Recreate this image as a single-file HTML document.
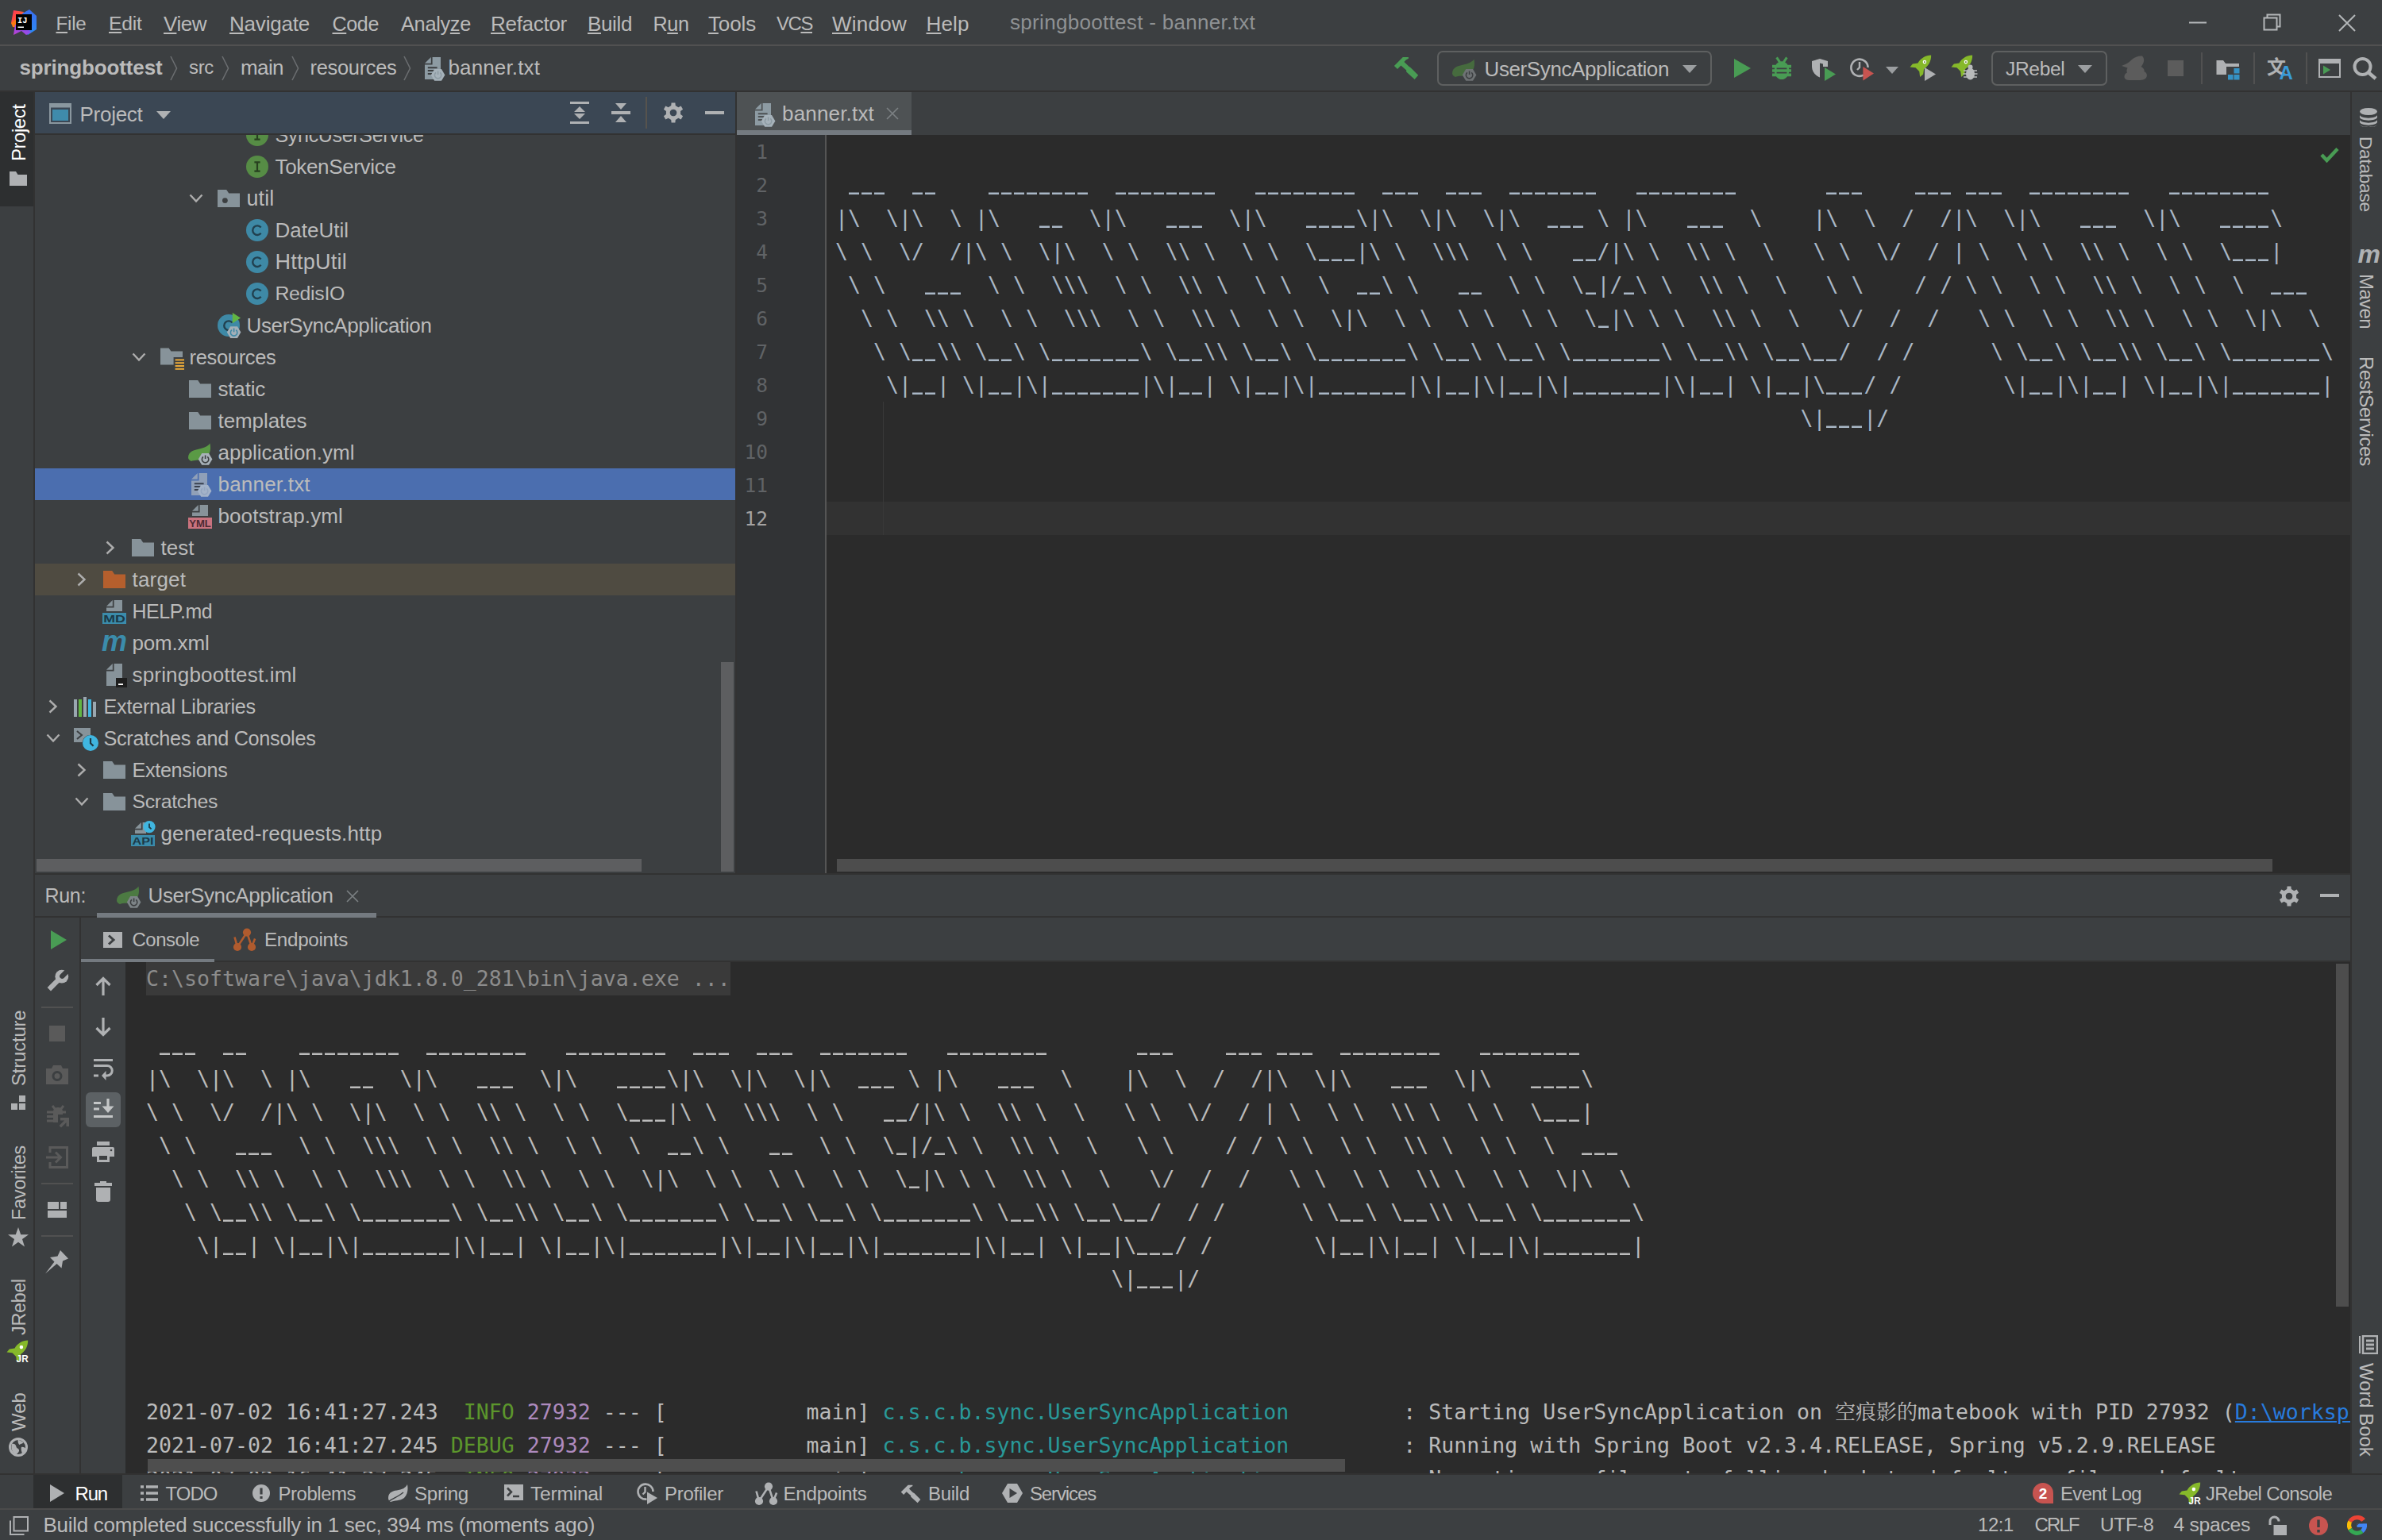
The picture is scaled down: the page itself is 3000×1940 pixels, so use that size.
<!DOCTYPE html>
<html lang="en"><head><meta charset="utf-8"><title>springboottest - banner.txt</title>
<style>
html,body{margin:0;padding:0;background:#3c3f41}
body{width:3000px;height:1940px;position:relative;overflow:hidden;font-family:"Liberation Sans",sans-serif;font-size:26px;color:#bbbbbb}
.a{position:absolute}
.t{position:absolute;white-space:pre;line-height:32px;height:32px}
.v{position:absolute;white-space:pre;line-height:32px;height:32px;transform-origin:0 0}
pre{margin:0;position:absolute;font-family:"DejaVu Sans Mono","Liberation Mono",monospace;font-size:26.578px;line-height:42px;white-space:pre}
u{text-decoration-thickness:2px;text-underline-offset:2px}
pre b{font-weight:bold;position:relative;top:-3px;-webkit-mask-image:repeating-linear-gradient(90deg,transparent 0 1.5px,#000 1.5px 14.5px,transparent 14.5px 16px);mask-image:repeating-linear-gradient(90deg,transparent 0 1.5px,#000 1.5px 14.5px,transparent 14.5px 16px)}

</style></head>
<body>
<div class="a" style="left:0px;top:56px;width:3000px;height:2px;background:#515151;"></div><div class="a" style="left:0px;top:114px;width:3000px;height:2px;background:#323232;"></div><div class="a" style="left:42px;top:116px;width:2px;height:1742px;background:#323232;"></div><div class="a" style="left:0px;top:116px;width:42px;height:144px;background:#2d2f30;"></div><div class="a" style="left:44px;top:116px;width:882px;height:52px;background:#3b4754;"></div><div class="a" style="left:44px;top:168px;width:882px;height:2px;background:#323232;"></div><div class="a" style="left:926px;top:116px;width:2px;height:984px;background:#323232;"></div><div class="a" style="left:928px;top:116px;width:2032px;height:54px;background:#3c3f41;"></div><div class="a" style="left:928px;top:116px;width:220px;height:54px;background:#4e5254;"></div><div class="a" style="left:928px;top:164px;width:220px;height:6px;background:#747a80;"></div><div class="a" style="left:928px;top:170px;width:2032px;height:930px;background:#2b2b2b;"></div><div class="a" style="left:928px;top:170px;width:111px;height:930px;background:#313335;"></div><div class="a" style="left:1039px;top:170px;width:2px;height:930px;background:#555555;"></div><div class="a" style="left:1041px;top:632px;width:1919px;height:42px;background:#323232;"></div><div class="a" style="left:1112px;top:506px;width:1px;height:168px;background:#393939;"></div><div class="a" style="left:2960px;top:116px;width:2px;height:1742px;background:#323232;"></div><div class="a" style="left:44px;top:1100px;width:2916px;height:2px;background:#323232;"></div><div class="a" style="left:44px;top:1154px;width:2916px;height:2px;background:#323232;"></div><div class="a" style="left:102px;top:1210px;width:2858px;height:2px;background:#323232;"></div><div class="a" style="left:158px;top:1212px;width:2802px;height:644px;background:#2b2b2b;"></div><div class="a" style="left:100px;top:1156px;width:2px;height:700px;background:#323232;"></div><div class="a" style="left:0px;top:1856px;width:3000px;height:2px;background:#323232;"></div><div class="a" style="left:42px;top:1858px;width:112px;height:42px;background:#2d2f30;"></div><div class="a" style="left:0px;top:1900px;width:3000px;height:2px;background:#4b4b4b;"></div><span class="t" style="left:70.5px;top:13.5px;font-size:24.18px;letter-spacing:-0.238px;"><u>F</u>ile</span><span class="t" style="left:137.0px;top:13.5px;font-size:24.70px;letter-spacing:-0.262px;"><u>E</u>dit</span><span class="t" style="left:206.0px;top:13.5px;letter-spacing:-0.473px;"><u>V</u>iew</span><span class="t" style="left:289.0px;top:13.5px;letter-spacing:-0.203px;"><u>N</u>avigate</span><span class="t" style="left:418.5px;top:13.5px;font-size:25.09px;letter-spacing:-0.367px;"><u>C</u>ode</span><span class="t" style="left:505.0px;top:13.5px;font-size:25.37px;letter-spacing:-0.319px;">Analy<u>z</u>e</span><span class="t" style="left:618.0px;top:13.5px;letter-spacing:-0.285px;"><u>R</u>efactor</span><span class="t" style="left:740.0px;top:13.5px;letter-spacing:-0.366px;"><u>B</u>uild</span><span class="t" style="left:822.5px;top:13.5px;font-size:25.15px;letter-spacing:-0.375px;">R<u>u</u>n</span><span class="t" style="left:892.0px;top:13.5px;letter-spacing:-0.141px;"><u>T</u>ools</span><span class="t" style="left:978.0px;top:13.5px;font-size:23.92px;letter-spacing:-1.391px;">VC<u>S</u></span><span class="t" style="left:1048.0px;top:13.5px;letter-spacing:0.253px;"><u>W</u>indow</span><span class="t" style="left:1166.5px;top:13.5px;letter-spacing:0.129px;"><u>H</u>elp</span><span class="t" style="left:1272.0px;top:11.5px;color:#8f9294;letter-spacing:0.310px;">springboottest - banner.txt</span><svg class="a" style="left:2757px;top:27px;" width="22" height="3" viewBox="0 0 22 3"><rect width="22" height="2" y="0.5" fill="#b4b7b9"/></svg><svg class="a" style="left:2850px;top:17px;" width="23" height="22" viewBox="0 0 23 22"><path d="M5.5 5.5V1.5H21.5V16.5H17.5M1.5 5.5H17.5V20.5H1.5Z" fill="none" stroke="#b4b7b9" stroke-width="2"/></svg><svg class="a" style="left:2945px;top:18px;" width="22" height="22" viewBox="0 0 22 22"><path d="M1 1L21 21M21 1L1 21" stroke="#b4b7b9" stroke-width="2" fill="none"/></svg><svg class="a" style="left:13px;top:11px;" width="34" height="34" viewBox="0 0 34 34"><defs><linearGradient id="lg1" x1="0" y1="0" x2="1" y2="1"><stop offset="0" stop-color="#fe315d"/><stop offset="1" stop-color="#f97a12"/></linearGradient><linearGradient id="lg2" x1="0" y1="0" x2="0" y2="1"><stop offset="0" stop-color="#3b6df0"/><stop offset="1" stop-color="#2c8cf4"/></linearGradient><linearGradient id="lg3" x1="0" y1="1" x2="1" y2="0"><stop offset="0" stop-color="#c03fd0"/><stop offset="1" stop-color="#6b57ff"/></linearGradient></defs><path d="M1 18L4 2L17 4L10 22Z" fill="url(#lg1)"/><path d="M1 18L8 13L10 24L3 23Z" fill="#f97a12"/><path d="M15 6L24 1L33 9L33 26L22 33L12 22Z" fill="url(#lg2)"/><path d="M4 33L6 20L22 24L26 30L20 33L14 28Z" fill="url(#lg3)"/><rect x="7" y="7" width="20" height="20" fill="#000000"/><rect x="9.500" y="22.500" width="7.500" height="1.500" fill="#ffffff"/><text x="9" y="17.500" font-family="Liberation Mono,monospace" font-weight="bold" font-size="11.500" fill="#ffffff" textLength="12.500" lengthAdjust="spacingAndGlyphs">IJ</text></svg><span class="t" style="left:24.5px;top:69.0px;font-weight:bold;letter-spacing:-0.143px;">springboottest</span><span class="t" style="left:238.0px;top:69.0px;font-size:23.92px;letter-spacing:-0.292px;">src</span><span class="t" style="left:303.0px;top:69.0px;letter-spacing:-0.590px;">main</span><span class="t" style="left:390.5px;top:69.0px;font-size:25.46px;letter-spacing:-0.307px;">resources</span><span class="t" style="left:564.5px;top:69.0px;letter-spacing:0.130px;">banner.txt</span><svg class="a" style="left:214px;top:70px;" width="10" height="32" viewBox="0 0 10 32"><path d="M1 1L8.5 16L1 31" fill="none" stroke="#6b6e70" stroke-width="1.6"/></svg><svg class="a" style="left:279px;top:70px;" width="10" height="32" viewBox="0 0 10 32"><path d="M1 1L8.5 16L1 31" fill="none" stroke="#6b6e70" stroke-width="1.6"/></svg><svg class="a" style="left:367px;top:70px;" width="10" height="32" viewBox="0 0 10 32"><path d="M1 1L8.5 16L1 31" fill="none" stroke="#6b6e70" stroke-width="1.6"/></svg><svg class="a" style="left:508px;top:70px;" width="10" height="32" viewBox="0 0 10 32"><path d="M1 1L8.5 16L1 31" fill="none" stroke="#6b6e70" stroke-width="1.6"/></svg><svg class="a" style="left:62px;top:130px;" width="28" height="26" viewBox="0 0 28 26"><rect x="1" y="1" width="26" height="24" fill="none" stroke="#8a979f" stroke-width="2"/><rect x="0" y="0" width="28" height="5.500" fill="#8a979f"/><rect x="4" y="8" width="20" height="14" fill="#3f8bac"/></svg><span class="t" style="left:100.5px;top:127.5px;letter-spacing:-0.275px;">Project</span><svg class="a" style="left:197px;top:140px;" width="18" height="10" viewBox="0 0 18 10"><path d="M0 0H18L9 10Z" fill="#afb1b3"/></svg><svg class="a" style="left:718px;top:128px;" width="24" height="28" viewBox="0 0 24 28"><path d="M0 1.5H24M0 26.5H24" stroke="#afb1b3" stroke-width="3"/><path d="M12 6L19 13H5ZM12 22L19 15H5Z" fill="#afb1b3"/></svg><svg class="a" style="left:769px;top:128px;" width="26" height="28" viewBox="0 0 26 28"><path d="M1 14H25" stroke="#afb1b3" stroke-width="4"/><path d="M13 10L20 2H6ZM13 18L20 26H6Z" fill="#afb1b3"/></svg><div class="a" style="left:813px;top:122px;width:2px;height:40px;background:#57534d;"></div><svg class="a" style="left:834.5px;top:129px;" width="26" height="26" viewBox="0 0 26 26"><path fill="#afb1b3" fill-rule="evenodd" d="M10.25 4.12L10.58 0.43L15.42 0.43L15.75 4.12L19.32 6.18L22.68 4.62L25.09 8.81L22.07 10.94L22.07 15.06L25.09 17.19L22.68 21.38L19.32 19.82L15.75 21.88L15.42 25.57L10.58 25.57L10.25 21.88L6.68 19.82L3.32 21.38L0.91 17.19L3.93 15.06L3.93 10.94L0.91 8.81L3.32 4.62L6.68 6.18ZM13 8.7a4.3 4.3 0 1 0 0.01 0z"/></svg><div class="a" style="left:888px;top:140px;width:24px;height:4px;background:#afb1b3;"></div><div class="a" style="left:44px;top:590px;width:882px;height:40px;background:#4b6eaf;"></div><div class="a" style="left:44px;top:710px;width:882px;height:40px;background:#4f4b41;"></div><div class="a" style="left:44px;top:170px;width:882px;height:930px;overflow:hidden"><div class="a" style="left:-44px;top:-170px;width:3000px;height:1940px"><svg class="a" style="left:307.5px;top:154px;" width="32" height="32" viewBox="0 0 16 16"><circle cx="8" cy="8" r="7" fill="#568c45"/><path d="M6.200 5.200H9.800M6.200 10.800H9.800M8 5.200V10.800" stroke="#27401f" stroke-width="1.100" fill="none"/></svg><span class="t" style="left:346.5px;top:154.0px;font-size:25.01px;letter-spacing:-0.316px;">SyncUserService</span><svg class="a" style="left:307.5px;top:194px;" width="32" height="32" viewBox="0 0 16 16"><circle cx="8" cy="8" r="7" fill="#568c45"/><path d="M6.200 5.200H9.800M6.200 10.800H9.800M8 5.200V10.800" stroke="#27401f" stroke-width="1.100" fill="none"/></svg><span class="t" style="left:346.5px;top:194.0px;letter-spacing:-0.340px;">TokenService</span><svg class="a" style="left:237.5px;top:244px;" width="18" height="12" viewBox="0 0 18 12"><path d="M1.500 1.500L9 9.500L16.500 1.500" fill="none" stroke="#adadad" stroke-width="2.400"/></svg><svg class="a" style="left:271.5px;top:234px;" width="32" height="32" viewBox="0 0 16 16"><path d="M1 13.500V2.500h5.600l1.500 2.200H15v8.800z" fill="#87939a"/><circle cx="5.700" cy="9.300" r="1.700" fill="#3c3f41"/></svg><span class="t" style="left:310.5px;top:234.0px;font-size:26.83px;letter-spacing:0.176px;">util</span><svg class="a" style="left:307.5px;top:274px;" width="32" height="32" viewBox="0 0 16 16"><circle cx="8" cy="8" r="7" fill="#3e89a6"/><path d="M10.300 6.300A2.900 2.900 0 1 0 10.300 9.900" stroke="#21404f" stroke-width="1.200" fill="none"/></svg><span class="t" style="left:346.5px;top:274.0px;">DateUtil</span><svg class="a" style="left:307.5px;top:314px;" width="32" height="32" viewBox="0 0 16 16"><circle cx="8" cy="8" r="7" fill="#3e89a6"/><path d="M10.300 6.300A2.900 2.900 0 1 0 10.300 9.900" stroke="#21404f" stroke-width="1.200" fill="none"/></svg><span class="t" style="left:346.5px;top:314.0px;font-size:27.06px;letter-spacing:0.229px;">HttpUtil</span><svg class="a" style="left:307.5px;top:354px;" width="32" height="32" viewBox="0 0 16 16"><circle cx="8" cy="8" r="7" fill="#3e89a6"/><path d="M10.300 6.300A2.900 2.900 0 1 0 10.300 9.900" stroke="#21404f" stroke-width="1.200" fill="none"/></svg><span class="t" style="left:346.5px;top:354.0px;font-size:24.84px;letter-spacing:-0.312px;">RedisIO</span><svg class="a" style="left:271.5px;top:394px;" width="32" height="32" viewBox="0 0 16 16"><circle cx="8" cy="8" r="7" fill="#3e89a6"/><path d="M10.300 6.300A2.900 2.900 0 1 0 10.300 9.900" stroke="#21404f" stroke-width="1.200" fill="none"/><path d="M10.400 0L15.500 3.200L10.400 6.600Z" fill="#62b543"/><path d="M6.9 12.3L9.100000000000001 8.600000000000001H13.5L15.700000000000001 12.3L13.5 16.0H9.100000000000001Z" fill="#a3afb8"/><path d="M10.0 10.8A2.100 2.100 0 1 0 12.600000000000001 10.8M11.3 9.8V12.100000000000001" fill="none" stroke="#3e89a6" stroke-width="0.800"/></svg><span class="t" style="left:310.5px;top:394.0px;letter-spacing:-0.363px;">UserSyncApplication</span><svg class="a" style="left:165.5px;top:444px;" width="18" height="12" viewBox="0 0 18 12"><path d="M1.500 1.500L9 9.500L16.500 1.500" fill="none" stroke="#adadad" stroke-width="2.400"/></svg><svg class="a" style="left:199.5px;top:434px;" width="32" height="32" viewBox="0 0 16 16"><path d="M1 12.800V2.200h5.300l1.400 2H15V8H9.300v4.800z" fill="#87939a"/><rect x="10.300" y="9.2" width="5.700" height="1" fill="#e9a93a"/><rect x="10.300" y="11.1" width="5.700" height="1" fill="#e9a93a"/><rect x="10.300" y="13" width="5.700" height="1" fill="#e9a93a"/><rect x="10.300" y="14.9" width="5.700" height="1" fill="#e9a93a"/></svg><span class="t" style="left:238.5px;top:434.0px;font-size:25.46px;letter-spacing:-0.307px;">resources</span><svg class="a" style="left:235.5px;top:474px;" width="32" height="32" viewBox="0 0 16 16"><path d="M1 13.500V2.500h5.600l1.500 2.200H15v8.800z" fill="#87939a"/></svg><span class="t" style="left:274.5px;top:474.0px;letter-spacing:-0.181px;">static</span><svg class="a" style="left:235.5px;top:514px;" width="32" height="32" viewBox="0 0 16 16"><path d="M1 13.500V2.500h5.600l1.500 2.200H15v8.800z" fill="#87939a"/></svg><span class="t" style="left:274.5px;top:514.0px;letter-spacing:-0.082px;">templates</span><svg class="a" style="left:235.5px;top:554px;" width="32" height="32" viewBox="0 0 16 16"><path d="M0.500 11.300C0.500 7 4.500 6.500 8.500 5.500C11.500 4.700 13.500 3.500 14.200 2.200C14.800 5 14.800 8.500 12 11C9 13.500 4 12.500 2.500 13.500C1.500 13 0.500 12.500 0.500 11.300Z" fill="#5a9a45"/><path d="M6.9 12.2L9.100000000000001 8.5H13.5L15.700000000000001 12.2L13.5 15.899999999999999H9.100000000000001Z" fill="#a8b2b9"/><path d="M10.0 10.7A2.100 2.100 0 1 0 12.600000000000001 10.7M11.3 9.7V12.0" fill="none" stroke="#3c3f41" stroke-width="0.800"/></svg><span class="t" style="left:274.5px;top:554.0px;">application.yml</span><svg class="a" style="left:235.0px;top:594px;" width="32" height="32" viewBox="0 0 16 16"><path d="M7.800 1H13V15H3V5.800H7.800Z" fill="#90a0b8"/><path d="M6.900 1L3 4.900H6.900Z" fill="#90a0b8"/><path d="M4.900 7.600H10.800M4.900 9.500H9M4.900 11.500H7.600" stroke="#39414f" stroke-width="0.950"/><path d="M6.9 12.2L9.100000000000001 8.5H13.5L15.700000000000001 12.2L13.5 15.899999999999999H9.100000000000001Z" fill="#a3b3c9"/><path d="M10.0 10.7A2.100 2.100 0 1 0 12.600000000000001 10.7M11.3 9.7V12.0" fill="none" stroke="#93a5c0" stroke-width="0.800"/></svg><span class="t" style="left:274.5px;top:594.0px;letter-spacing:0.210px;">banner.txt</span><svg class="a" style="left:235.5px;top:634px;" width="32" height="32" viewBox="0 0 16 16"><path d="M7.800 1H13V8H3V5.800H7.800Z" fill="#87939a"/><path d="M6.900 1L3 4.900H6.900Z" fill="#87939a"/><rect x="0.500" y="9" width="15" height="7" fill="#c9737f"/><text x="8" y="15.100" font-family="Liberation Sans,sans-serif" font-weight="bold" font-size="6.600" text-anchor="middle" fill="#4d2a33" textLength="13.800" lengthAdjust="spacingAndGlyphs">YML</text></svg><span class="t" style="left:274.5px;top:634.0px;letter-spacing:0.102px;">bootstrap.yml</span><svg class="a" style="left:132.5px;top:681px;" width="12" height="18" viewBox="0 0 12 18"><path d="M1.500 1.500L9.500 9L1.500 16.500" fill="none" stroke="#adadad" stroke-width="2.400"/></svg><svg class="a" style="left:163.5px;top:674px;" width="32" height="32" viewBox="0 0 16 16"><path d="M1 13.500V2.500h5.600l1.500 2.200H15v8.800z" fill="#87939a"/></svg><span class="t" style="left:202.5px;top:674.0px;">test</span><svg class="a" style="left:96.5px;top:721px;" width="12" height="18" viewBox="0 0 12 18"><path d="M1.500 1.500L9.500 9L1.500 16.500" fill="none" stroke="#adadad" stroke-width="2.400"/></svg><svg class="a" style="left:127.5px;top:714px;" width="32" height="32" viewBox="0 0 16 16"><path d="M1 13.500V2.500h5.600l1.500 2.200H15v8.800z" fill="#b55f2d"/></svg><span class="t" style="left:166.5px;top:714.0px;letter-spacing:0.183px;">target</span><svg class="a" style="left:127.5px;top:754px;" width="32" height="32" viewBox="0 0 16 16"><path d="M7.800 1H13V8H3V5.800H7.800Z" fill="#87939a"/><path d="M6.900 1L3 4.900H6.900Z" fill="#87939a"/><rect x="0.500" y="9" width="15" height="7" fill="#3b8cab"/><text x="8" y="15.100" font-family="Liberation Sans,sans-serif" font-weight="bold" font-size="6.600" text-anchor="middle" fill="#1c3947" textLength="13.800" lengthAdjust="spacingAndGlyphs">MD</text></svg><span class="t" style="left:166.5px;top:754.0px;font-size:24.91px;letter-spacing:-0.368px;">HELP.md</span><span class="t" style="left:128.0px;top:792.0px;font-size:36px;color:#3b8cab;font-weight:bold;font-style:italic;">m</span><span class="t" style="left:166.5px;top:794.0px;letter-spacing:-0.179px;">pom.xml</span><svg class="a" style="left:127.5px;top:834px;" width="32" height="32" viewBox="0 0 16 16"><path d="M7.800 1H13V15H3V5.800H7.800Z" fill="#87939a"/><path d="M6.900 1L3 4.900H6.900Z" fill="#87939a"/><rect x="9" y="10" width="7" height="6" fill="#1e1e1e"/><rect x="10.500" y="13.600" width="3" height="0.900" fill="#ffffff"/></svg><span class="t" style="left:166.5px;top:834.0px;letter-spacing:0.180px;">springboottest.iml</span><svg class="a" style="left:60.5px;top:881px;" width="12" height="18" viewBox="0 0 12 18"><path d="M1.500 1.500L9.500 9L1.500 16.500" fill="none" stroke="#adadad" stroke-width="2.400"/></svg><svg class="a" style="left:91.5px;top:874px;" width="32" height="32" viewBox="0 0 16 16"><rect x="0.500" y="3.500" width="2" height="11" fill="#9aa7b0"/><rect x="3.500" y="3.500" width="2" height="11" fill="#62b543"/><rect x="6.500" y="2" width="2" height="12.500" fill="#9aa7b0"/><rect x="9.500" y="3.500" width="2" height="11" fill="#40b6e0"/><rect x="12.500" y="5" width="2" height="9.500" fill="#9aa7b0"/></svg><span class="t" style="left:130.5px;top:874.0px;font-size:25.23px;letter-spacing:-0.269px;">External Libraries</span><svg class="a" style="left:57.5px;top:924px;" width="18" height="12" viewBox="0 0 18 12"><path d="M1.500 1.500L9 9.500L16.500 1.500" fill="none" stroke="#adadad" stroke-width="2.400"/></svg><svg class="a" style="left:91.5px;top:914px;" width="32" height="32" viewBox="0 0 16 16"><path d="M0.500 1.500H11V6A5 5 0 0 0 5.800 10.500H0.500Z" fill="#87939a"/><path d="M2.500 3.500L5.500 6L2.500 8.500" stroke="#3c3f41" stroke-width="1" fill="none"/><circle cx="11" cy="11" r="5" fill="#40b6e0"/><path d="M11 8V11.200L12.800 12.900" stroke="#1f3a45" stroke-width="1.100" fill="none"/></svg><span class="t" style="left:130.5px;top:914.0px;font-size:25.26px;letter-spacing:-0.305px;">Scratches and Consoles</span><svg class="a" style="left:96.5px;top:961px;" width="12" height="18" viewBox="0 0 12 18"><path d="M1.500 1.500L9.500 9L1.500 16.500" fill="none" stroke="#adadad" stroke-width="2.400"/></svg><svg class="a" style="left:127.5px;top:954px;" width="32" height="32" viewBox="0 0 16 16"><path d="M1 13.500V2.500h5.600l1.500 2.200H15v8.800z" fill="#87939a"/></svg><span class="t" style="left:166.5px;top:954.0px;font-size:25.16px;letter-spacing:-0.306px;">Extensions</span><svg class="a" style="left:93.5px;top:1004px;" width="18" height="12" viewBox="0 0 18 12"><path d="M1.500 1.500L9 9.500L16.500 1.500" fill="none" stroke="#adadad" stroke-width="2.400"/></svg><svg class="a" style="left:127.5px;top:994px;" width="32" height="32" viewBox="0 0 16 16"><path d="M1 13.500V2.500h5.600l1.500 2.200H15v8.800z" fill="#87939a"/></svg><span class="t" style="left:166.5px;top:994.0px;font-size:24.80px;letter-spacing:-0.307px;">Scratches</span><svg class="a" style="left:163.5px;top:1034px;" width="32" height="32" viewBox="0 0 16 16"><path d="M7.800 1H10V8H3V5.800H7.800Z" fill="#87939a"/><path d="M6.900 1L3 4.900H6.900Z" fill="#87939a"/><rect x="0.500" y="9" width="15" height="7" fill="#3b8cab"/><text x="8" y="15.100" font-family="Liberation Sans,sans-serif" font-weight="bold" font-size="6.200" text-anchor="middle" fill="#1c3947" textLength="13.500" lengthAdjust="spacingAndGlyphs">API</text><circle cx="12" cy="3.800" r="3.800" fill="#40b6e0"/><path d="M12 1.800V4L13.300 5.200" stroke="#1f3a45" stroke-width="0.900" fill="none"/></svg><span class="t" style="left:202.5px;top:1034.0px;letter-spacing:0.118px;">generated-requests.http</span></div></div><div class="a" style="left:908px;top:834px;width:16px;height:264px;background:#5d5e60;"></div><div class="a" style="left:46px;top:1082px;width:762px;height:16px;background:#5d5e60;"></div><svg class="a" style="left:944.5px;top:128px;" width="32" height="32" viewBox="0 0 16 16"><path d="M7.800 1H13V15H3V5.800H7.800Z" fill="#8d9ba3"/><path d="M6.900 1L3 4.900H6.900Z" fill="#8d9ba3"/><path d="M4.900 7.600H10.800M4.900 9.500H9M4.900 11.500H7.600" stroke="#4e5254" stroke-width="0.950"/><path d="M6.9 12.2L9.100000000000001 8.5H13.5L15.700000000000001 12.2L13.5 15.899999999999999H9.100000000000001Z" fill="#a6b2ba"/><path d="M10.0 10.7A2.100 2.100 0 1 0 12.600000000000001 10.7M11.3 9.7V12.0" fill="none" stroke="#8d9ba3" stroke-width="0.800"/></svg><span class="t" style="left:985.0px;top:127.0px;letter-spacing:0.180px;">banner.txt</span><svg class="a" style="left:1116px;top:135px;" width="16" height="16" viewBox="0 0 16 16"><path d="M1 1L15 15M15 1L1 15" stroke="#7c8184" stroke-width="1.600" fill="none"/></svg><svg class="a" style="left:529px;top:70px;" width="32" height="32" viewBox="0 0 16 16"><path d="M7.800 1H13V15H3V5.800H7.800Z" fill="#8d9ba3"/><path d="M6.900 1L3 4.900H6.900Z" fill="#8d9ba3"/><path d="M4.900 7.600H10.800M4.900 9.500H9M4.900 11.500H7.600" stroke="#3c3f41" stroke-width="0.950"/><path d="M6.9 12.2L9.100000000000001 8.5H13.5L15.700000000000001 12.2L13.5 15.899999999999999H9.100000000000001Z" fill="#a6b2ba"/><path d="M10.0 10.7A2.100 2.100 0 1 0 12.600000000000001 10.7M11.3 9.7V12.0" fill="none" stroke="#8d9ba3" stroke-width="0.800"/></svg><span class="t" style="left:906px;width:61px;text-align:right;top:175.5px;font-family:'DejaVu Sans Mono',monospace;font-size:24.5px;color:#606366">1</span><span class="t" style="left:906px;width:61px;text-align:right;top:217.5px;font-family:'DejaVu Sans Mono',monospace;font-size:24.5px;color:#606366">2</span><span class="t" style="left:906px;width:61px;text-align:right;top:259.5px;font-family:'DejaVu Sans Mono',monospace;font-size:24.5px;color:#606366">3</span><span class="t" style="left:906px;width:61px;text-align:right;top:301.5px;font-family:'DejaVu Sans Mono',monospace;font-size:24.5px;color:#606366">4</span><span class="t" style="left:906px;width:61px;text-align:right;top:343.5px;font-family:'DejaVu Sans Mono',monospace;font-size:24.5px;color:#606366">5</span><span class="t" style="left:906px;width:61px;text-align:right;top:385.5px;font-family:'DejaVu Sans Mono',monospace;font-size:24.5px;color:#606366">6</span><span class="t" style="left:906px;width:61px;text-align:right;top:427.5px;font-family:'DejaVu Sans Mono',monospace;font-size:24.5px;color:#606366">7</span><span class="t" style="left:906px;width:61px;text-align:right;top:469.5px;font-family:'DejaVu Sans Mono',monospace;font-size:24.5px;color:#606366">8</span><span class="t" style="left:906px;width:61px;text-align:right;top:511.5px;font-family:'DejaVu Sans Mono',monospace;font-size:24.5px;color:#606366">9</span><span class="t" style="left:906px;width:61px;text-align:right;top:553.5px;font-family:'DejaVu Sans Mono',monospace;font-size:24.5px;color:#606366">10</span><span class="t" style="left:906px;width:61px;text-align:right;top:595.5px;font-family:'DejaVu Sans Mono',monospace;font-size:24.5px;color:#606366">11</span><span class="t" style="left:906px;width:61px;text-align:right;top:637.5px;font-family:'DejaVu Sans Mono',monospace;font-size:24.5px;color:#a4a3a3">12</span><pre style="left:1052px;top:212px;color:#a9b7c6"> <b>___</b>  <b>__</b>    <b>________</b>  <b>________</b>   <b>________</b>  <b>___</b>  <b>___</b>  <b>_______</b>   <b>________</b>       <b>___</b>    <b>___</b> <b>___</b>  <b>________</b>   <b>________</b>
|\  \|\  \ |\   <b>__</b>  \|\   <b>___</b>  \|\   <b>____</b>\|\  \|\  \|\  <b>___</b> \ |\   <b>___</b>  \    |\  \  /  /|\  \|\   <b>___</b>  \|\   <b>____</b>\
\ \  \/  /|\ \  \|\  \ \  \\ \  \ \  \<b>___</b>|\ \  \\\  \ \   <b>__</b>/|\ \  \\ \  \   \ \  \/  / | \  \ \  \\ \  \ \  \<b>___</b>|
 \ \   <b>___</b>  \ \  \\\  \ \  \\ \  \ \  \  <b>__</b>\ \   <b>__</b>  \ \  \<b>_</b>|/<b>_</b>\ \  \\ \  \   \ \    / / \ \  \ \  \\ \  \ \  \  <b>___</b>
  \ \  \\ \  \ \  \\\  \ \  \\ \  \ \  \|\  \ \  \ \  \ \  \<b>_</b>|\ \ \  \\ \  \   \/  /  /   \ \  \ \  \\ \  \ \  \|\  \
   \ \<b>__</b>\\ \<b>__</b>\ \<b>_______</b>\ \<b>__</b>\\ \<b>__</b>\ \<b>_______</b>\ \<b>__</b>\ \<b>__</b>\ \<b>_______</b>\ \<b>__</b>\\ \<b>__</b>\<b>__</b>/  / /      \ \<b>__</b>\ \<b>__</b>\\ \<b>__</b>\ \<b>_______</b>\
    \|<b>__</b>| \|<b>__</b>|\|<b>_______</b>|\|<b>__</b>| \|<b>__</b>|\|<b>_______</b>|\|<b>__</b>|\|<b>__</b>|\|<b>_______</b>|\|<b>__</b>| \|<b>__</b>|\<b>___</b>/ /        \|<b>__</b>|\|<b>__</b>| \|<b>__</b>|\|<b>_______</b>|
                                                                            \|<b>___</b>|/</pre><svg class="a" style="left:2922px;top:185px;" width="24" height="20" viewBox="0 0 24 20"><path d="M2 10L8.500 17L22 2.500" fill="none" stroke="#499c54" stroke-width="4.500"/></svg><div class="a" style="left:1054px;top:1082px;width:1808px;height:16px;background:#4d4d4d;"></div><span class="t" style="left:56.5px;top:1111.5px;font-size:25.01px;letter-spacing:-0.328px;">Run:</span><div class="a" style="left:122px;top:1150px;width:352px;height:6px;background:#747a80;"></div><span class="t" style="left:186.5px;top:1111.5px;letter-spacing:-0.363px;">UserSyncApplication</span><svg class="a" style="left:436px;top:1121px;" width="16" height="16" viewBox="0 0 16 16"><path d="M1 1L15 15M15 1L1 15" stroke="#7c8184" stroke-width="1.600" fill="none"/></svg><svg class="a" style="left:2870px;top:1115.5px;" width="26" height="26" viewBox="0 0 26 26"><path fill="#afb1b3" fill-rule="evenodd" d="M10.25 4.12L10.58 0.43L15.42 0.43L15.75 4.12L19.32 6.18L22.68 4.62L25.09 8.81L22.07 10.94L22.07 15.06L25.09 17.19L22.68 21.38L19.32 19.82L15.75 21.88L15.42 25.57L10.58 25.57L10.25 21.88L6.68 19.82L3.32 21.38L0.91 17.19L3.93 15.06L3.93 10.94L0.91 8.81L3.32 4.62L6.68 6.18ZM13 8.7a4.3 4.3 0 1 0 0.01 0z"/></svg><div class="a" style="left:2922px;top:1126px;width:24px;height:4px;background:#afb1b3;"></div><div class="a" style="left:102px;top:1208px;width:168px;height:4px;background:#747a80;"></div><span class="t" style="left:166.5px;top:1167.5px;font-size:23.92px;letter-spacing:-0.460px;">Console</span><span class="t" style="left:333.0px;top:1167.5px;font-size:24.21px;letter-spacing:-0.295px;">Endpoints</span><div class="a" style="left:158px;top:1212px;width:2802px;height:644px;overflow:hidden"><div class="a" style="left:26px;top:0px;width:736px;height:42px;background:#3a3a3a;"></div><pre style="left:26px;top:0px;color:#bbbbbb"><span style="color:#8c8c8c">C:\software\java\jdk1.8.0_281\bin\java.exe ...</span>

 <b>___</b>  <b>__</b>    <b>________</b>  <b>________</b>   <b>________</b>  <b>___</b>  <b>___</b>  <b>_______</b>   <b>________</b>       <b>___</b>    <b>___</b> <b>___</b>  <b>________</b>   <b>________</b>
|\  \|\  \ |\   <b>__</b>  \|\   <b>___</b>  \|\   <b>____</b>\|\  \|\  \|\  <b>___</b> \ |\   <b>___</b>  \    |\  \  /  /|\  \|\   <b>___</b>  \|\   <b>____</b>\
\ \  \/  /|\ \  \|\  \ \  \\ \  \ \  \<b>___</b>|\ \  \\\  \ \   <b>__</b>/|\ \  \\ \  \   \ \  \/  / | \  \ \  \\ \  \ \  \<b>___</b>|
 \ \   <b>___</b>  \ \  \\\  \ \  \\ \  \ \  \  <b>__</b>\ \   <b>__</b>  \ \  \<b>_</b>|/<b>_</b>\ \  \\ \  \   \ \    / / \ \  \ \  \\ \  \ \  \  <b>___</b>
  \ \  \\ \  \ \  \\\  \ \  \\ \  \ \  \|\  \ \  \ \  \ \  \<b>_</b>|\ \ \  \\ \  \   \/  /  /   \ \  \ \  \\ \  \ \  \|\  \
   \ \<b>__</b>\\ \<b>__</b>\ \<b>_______</b>\ \<b>__</b>\\ \<b>__</b>\ \<b>_______</b>\ \<b>__</b>\ \<b>__</b>\ \<b>_______</b>\ \<b>__</b>\\ \<b>__</b>\<b>__</b>/  / /      \ \<b>__</b>\ \<b>__</b>\\ \<b>__</b>\ \<b>_______</b>\
    \|<b>__</b>| \|<b>__</b>|\|<b>_______</b>|\|<b>__</b>| \|<b>__</b>|\|<b>_______</b>|\|<b>__</b>|\|<b>__</b>|\|<b>_______</b>|\|<b>__</b>| \|<b>__</b>|\<b>___</b>/ /        \|<b>__</b>|\|<b>__</b>| \|<b>__</b>|\|<b>_______</b>|
                                                                            \|<b>___</b>|/



2021-07-02 16:41:27.243 <span style="color:#5c962c"> INFO</span> <span style="color:#ae8abe">27932</span> --- [           main] <span style="color:#299999">c.s.c.b.sync.UserSyncApplication        </span> : Starting UserSyncApplication on <span style="font-family:'Noto Serif CJK SC','Noto Sans CJK SC',serif;font-size:26px;line-height:0">空痕影的</span>matebook with PID 27932 (<span style="color:#287bde;text-decoration:underline">D:\workspace\</span>
2021-07-02 16:41:27.245 <span style="color:#5c962c">DEBUG</span> <span style="color:#ae8abe">27932</span> --- [           main] <span style="color:#299999">c.s.c.b.sync.UserSyncApplication        </span> : Running with Spring Boot v2.3.4.RELEASE, Spring v5.2.9.RELEASE
2021-07-02 16:41:27.245 <span style="color:#5c962c"> INFO</span> <span style="color:#ae8abe">27932</span> --- [           main] <span style="color:#299999">c.s.c.b.sync.UserSyncApplication        </span> : No active profile set, falling back to default profiles: default</pre><div class="a" style="left:28px;top:626px;width:1508px;height:16px;background:#4e4e4e;"></div></div><div class="a" style="left:2942px;top:1214px;width:16px;height:432px;background:#4d4d4d;"></div><svg class="a" style="left:1755px;top:70px;" width="32" height="32" viewBox="0 0 32 32"><path d="M0.900 13L11.800 2.100H18.900V3.700L15.700 5.600L13.500 8.100L19.500 13.800L21.400 14.900L31.200 24.700L26.600 29.900L16.200 20.400V18.500L9.400 12.500L5 17.100Z" fill="#499c54"/></svg><div class="a" style="left:1810px;top:64px;width:342px;height:40px;border:2px solid #5e6060;border-radius:7px"></div><svg class="a" style="left:1828px;top:69.5px;" width="32" height="32" viewBox="0 0 16 16"><path d="M0.500 11.300C0.500 7 4.500 6.500 8.500 5.500C11.500 4.700 13.500 3.500 14.200 2.200C14.800 5 14.800 8.500 12 11C9 13.500 4 12.500 2.500 13.500C1.500 13 0.500 12.500 0.500 11.300Z" fill="#466b3e"/><path d="M6.9 12.2L9.100000000000001 8.5H13.5L15.700000000000001 12.2L13.5 15.899999999999999H9.100000000000001Z" fill="#6e7274"/><path d="M10.0 10.7A2.100 2.100 0 1 0 12.600000000000001 10.7M11.3 9.7V12.0" fill="none" stroke="#3c3f41" stroke-width="0.800"/></svg><span class="t" style="left:1869.5px;top:70.5px;letter-spacing:-0.389px;">UserSyncApplication</span><svg class="a" style="left:2119px;top:82px;" width="18" height="10" viewBox="0 0 18 10"><path d="M0 0H18L9 10Z" fill="#9b9ea0"/></svg><svg class="a" style="left:2184px;top:74px;" width="21" height="24" viewBox="0 0 21 24"><path d="M0 0L21 12L0 24Z" fill="#499c54"/></svg><svg class="a" style="left:2228px;top:70px;" width="32" height="32" viewBox="0 0 16 16"><ellipse cx="8" cy="9.300" rx="4.700" ry="5.700" fill="#499c54"/><path d="M4.800 1.200L6.800 4.200M11.200 1.200L9.200 4.200" stroke="#499c54" stroke-width="1.500"/><path d="M2 6.800H14M2 9.500H14M2 12.200H14" stroke="#499c54" stroke-width="1.800"/><path d="M4.800 8.150H11.200M4.800 10.850H11.200" stroke="#3c3f41" stroke-width="0.900"/></svg><svg class="a" style="left:2280px;top:72px;" width="34" height="32" viewBox="0 0 17 16"><path d="M1 2.500L6 1L11 2.500V6L8 6V4.200L6 3.800V12.800C3 11.500 1 9 1 6Z" fill="#afb1b3"/><path d="M9 6.500L16 10.700L9 15Z" fill="#499c54"/></svg><svg class="a" style="left:2328px;top:70px;" width="34" height="34" viewBox="0 0 17 17"><path d="M9.500 12.300A5.300 5.300 0 1 1 12.300 7.500" fill="none" stroke="#afb1b3" stroke-width="1.300"/><path d="M7 4V7.500L5.500 9" fill="none" stroke="#afb1b3" stroke-width="1.200"/><path d="M9.200 7L16 11.300L9.200 15.800Z" fill="#c75450"/></svg><svg class="a" style="left:2375px;top:84px;" width="16" height="9" viewBox="0 0 16 9"><path d="M0 0H16L8 9Z" fill="#9b9ea0"/></svg><svg class="a" style="left:2405px;top:69px;" width="28" height="28" viewBox="0 0 16 16"><path d="M15.500 0.300C11.500 0.300 8 2.500 6 6L2.200 6.500L0.300 8.800L4.300 9.300L7 12L7.500 16L9.800 14L10.300 10.300C13.500 8.200 15.700 4.500 15.500 0.300Z" fill="#86b92a"/><circle cx="10.800" cy="5.200" r="1.300" fill="#ffffff"/><circle cx="10.800" cy="5.200" r="0.550" fill="#4d6e14"/></svg><svg class="a" style="left:2424px;top:85px;" width="14" height="17" viewBox="0 0 14 17"><path d="M0 0L14 8.500L0 17Z" fill="#afb1b3"/></svg><svg class="a" style="left:2457px;top:69px;" width="28" height="28" viewBox="0 0 16 16"><path d="M15.500 0.300C11.500 0.300 8 2.500 6 6L2.200 6.500L0.300 8.800L4.300 9.300L7 12L7.500 16L9.800 14L10.300 10.300C13.500 8.200 15.700 4.500 15.500 0.300Z" fill="#86b92a"/><circle cx="10.800" cy="5.200" r="1.300" fill="#ffffff"/><circle cx="10.800" cy="5.200" r="0.550" fill="#4d6e14"/></svg><svg class="a" style="left:2472px;top:81px;" width="19" height="21" viewBox="0 0 19 21"><ellipse cx="9.500" cy="12" rx="5.500" ry="7.500" fill="#b8babb"/><circle cx="9.500" cy="3.500" r="3" fill="#b8babb"/><path d="M1 8H18M0.500 12H18.500M1 16H18" stroke="#b8babb" stroke-width="1.600"/></svg><div class="a" style="left:2508px;top:64px;width:142px;height:40px;border:2px solid #5e6060;border-radius:7px"></div><span class="t" style="left:2526.0px;top:70.5px;font-size:24.55px;letter-spacing:-0.320px;">JRebel</span><svg class="a" style="left:2617px;top:82px;" width="18" height="10" viewBox="0 0 18 10"><path d="M0 0H18L9 10Z" fill="#9b9ea0"/></svg><svg class="a" style="left:2672px;top:69px;" width="33" height="33" viewBox="0 0 16.500 16.500"><path d="M13 0.800C14.800 2.500 14.200 5.500 12.300 7.500C13.800 8.200 14.500 9.300 14.300 10.600C16 11.200 16.300 13 15.600 14.300C14.800 15.700 13 16 11.800 16H4.500C2.500 16 1.500 14.800 1.800 13.300C2 12.200 2.800 11.600 3.500 11.300C3 10 3.200 9.200 3.800 8.200L0 7C3 6 5 4.500 6.500 3C8.500 1.300 11 0.500 13 0.800Z" fill="#5c5c5c"/></svg><div class="a" style="left:2730px;top:76px;width:20px;height:20px;background:#5c5c5c;"></div><div class="a" style="left:2772px;top:66px;width:2px;height:40px;background:#515151;"></div><svg class="a" style="left:2791px;top:74px;" width="30" height="28" viewBox="0 0 30 28"><path d="M0.500 2H9L12 6H29V20H0.500Z" fill="#afb1b3"/><rect x="13" y="10" width="17" height="18" fill="#3c3f41"/><rect x="22.500" y="12" width="7" height="6.500" fill="#3592c4"/><rect x="15" y="20" width="6.500" height="6.500" fill="#3592c4"/><rect x="22.500" y="20" width="7" height="6.500" fill="#3592c4"/></svg><div class="a" style="left:2838px;top:66px;width:2px;height:40px;background:#515151;"></div><svg class="a" style="left:2853px;top:68px" width="38" height="36" viewBox="0 0 38 36"><text x="2" y="25" font-family="Noto Sans CJK SC,sans-serif" font-weight="bold" font-size="24" fill="#afb1b3">文</text><text x="17.500" y="32" font-family="Liberation Sans,sans-serif" font-weight="bold" font-size="24" fill="#3a9bd9">A</text></svg><div class="a" style="left:2904px;top:66px;width:2px;height:40px;background:#515151;"></div><svg class="a" style="left:2920px;top:74px;" width="28" height="24" viewBox="0 0 28 24"><rect x="1" y="1" width="26" height="22" fill="none" stroke="#afb1b3" stroke-width="2"/><rect x="0" y="0" width="28" height="6" fill="#afb1b3"/><path d="M6 8.500L15 14L6 19.500Z" fill="#499c54"/></svg><svg class="a" style="left:2962px;top:71px;" width="32" height="30" viewBox="0 0 32 30"><circle cx="13.500" cy="13" r="10" fill="none" stroke="#afb1b3" stroke-width="4"/><path d="M20.500 20L30 28" stroke="#afb1b3" stroke-width="4.500"/></svg><span class="v" style="left:8.2px;top:203.0px;font-size:24px;color:#ffffff;transform:rotate(-90deg);letter-spacing:-0.458px;">Project</span><svg class="a" style="left:12px;top:216px;" width="22" height="18" viewBox="0 0 22 18"><path d="M0 18V0H8L10.500 4H22V18Z" fill="#afb1b3"/></svg><span class="v" style="left:8.2px;top:1367.5px;font-size:24px;transform:rotate(-90deg);letter-spacing:-0.208px;">Structure</span><svg class="a" style="left:14px;top:1380px;" width="18" height="18" viewBox="0 0 18 18"><rect x="10" y="0" width="8" height="8" fill="#afb1b3"/><rect x="0" y="10" width="8" height="8" fill="#afb1b3"/><rect x="10" y="10" width="8" height="8" fill="#afb1b3"/></svg><span class="v" style="left:8.2px;top:1537.0px;font-size:23.44px;transform:rotate(-90deg);letter-spacing:-0.266px;">Favorites</span><svg class="a" style="left:10px;top:1546px;" width="26" height="25" viewBox="0 0 26 25"><path d="M13 0L16.200 9.300H26L18 15L21 24.500L13 18.700L5 24.500L8 15L0 9.300H9.800Z" fill="#afb1b3"/></svg><span class="v" style="left:8.2px;top:1682.0px;font-size:23.39px;transform:rotate(-90deg);letter-spacing:-0.294px;">JRebel</span><svg class="a" style="left:8px;top:1688px;" width="28" height="28" viewBox="0 0 16 16"><path d="M15.500 0.300C11.500 0.300 8 2.500 6 6L2.200 6.500L0.300 8.800L4.300 9.300L7 12L7.500 16L9.800 14L10.300 10.300C13.500 8.200 15.700 4.500 15.500 0.300Z" fill="#86b92a"/><circle cx="10.800" cy="5.200" r="1.300" fill="#ffffff"/><text x="7.200" y="15.800" font-family="Liberation Sans,sans-serif" font-weight="bold" font-size="7" fill="#ffffff" textLength="8.600" lengthAdjust="spacingAndGlyphs">JR</text></svg><span class="v" style="left:8.2px;top:1803.0px;font-size:24px;transform:rotate(-90deg);letter-spacing:0.026px;">Web</span><svg class="a" style="left:11px;top:1811px;" width="24" height="24" viewBox="0 0 24 24"><circle cx="12" cy="12" r="10.500" fill="none" stroke="#afb1b3" stroke-width="3"/><path d="M4 8C7 7 9 9 9.500 11.500C10 14 12 13 13 15.500C13.500 18 11 20 9 21.500C5 19 2 14 4 8ZM12 2C14 4.500 17 4 18.500 6.500C17 8 15 7.500 13.500 9C12 8 11 4.500 12 2ZM16 12C18 11.500 20 12.500 21.500 14C20.500 17 19 19 17 20C16 17 15 14 16 12Z" fill="#afb1b3"/></svg><svg class="a" style="left:64px;top:1172px;" width="20" height="24" viewBox="0 0 20 24"><path d="M0 0L20 12L0 24Z" fill="#499c54"/></svg><svg class="a" style="left:58px;top:1221px;" width="29" height="29" viewBox="0 0 29 29"><path d="M3.800 25.200L15.500 13.500" stroke="#afb1b3" stroke-width="6.200"/><circle cx="19.800" cy="9.200" r="8.400" fill="#afb1b3"/><path d="M20.300 8.700L30 -1" stroke="#3c3f41" stroke-width="6.400" stroke-linecap="round"/></svg><div class="a" style="left:52px;top:1268px;width:40px;height:2px;background:#515151;"></div><div class="a" style="left:62px;top:1292px;width:20px;height:20px;background:#5a5a5a;"></div><svg class="a" style="left:58px;top:1342px;" width="28" height="24" viewBox="0 0 28 24"><path d="M0 4H7L9 0H19L21 4H28V24H0Z" fill="#5a5a5a"/><circle cx="14" cy="13.500" r="5" fill="none" stroke="#3c3f41" stroke-width="3"/></svg><svg class="a" style="left:59px;top:1392px;" width="30" height="30" viewBox="0 0 30 30"><path d="M8 8A6 5 0 0 1 20 8V12H14V22H8Z" fill="#5a5a5a"/><path d="M7 1L11 6M21 1L17 6" stroke="#5a5a5a" stroke-width="3"/><path d="M0 9H8M0 14.500H8M0 20H8M20 9H24" stroke="#5a5a5a" stroke-width="3"/><path d="M17 16H28V27H24.500V22L18 28.500L15.500 26L22 19.500H17Z" fill="#5a5a5a"/></svg><svg class="a" style="left:58px;top:1444px;" width="28" height="28" viewBox="0 0 28 28"><path d="M5 8V1.500H26.500V26.500H5V20" fill="none" stroke="#5a5a5a" stroke-width="3"/><path d="M0 14H17M12 7.500L18.500 14L12 20.500" fill="none" stroke="#5a5a5a" stroke-width="3"/></svg><div class="a" style="left:52px;top:1490px;width:40px;height:2px;background:#515151;"></div><svg class="a" style="left:60px;top:1514px;" width="24" height="20" viewBox="0 0 24 20"><rect x="0" y="0" width="14" height="9" fill="#afb1b3"/><rect x="16" y="0" width="8" height="9" fill="#afb1b3"/><rect x="0" y="11" width="24" height="9" fill="#afb1b3"/></svg><div class="a" style="left:52px;top:1556px;width:40px;height:2px;background:#515151;"></div><svg class="a" style="left:57px;top:1575px;" width="30" height="30" viewBox="0 0 30 30"><path d="M19 0L29 10.500L22 13.500L20.500 22.500L14.500 17L0 29.500L11.500 14.500L6 9L15.500 7.500Z" fill="#afb1b3"/></svg><svg class="a" style="left:120px;top:1230px;" width="20" height="24" viewBox="0 0 20 24"><path d="M10 24V3M1.500 11L10 2.500L18.500 11" fill="none" stroke="#afb1b3" stroke-width="3.200"/></svg><svg class="a" style="left:120px;top:1282px;transform:rotate(180deg);" width="20" height="24" viewBox="0 0 20 24"><path d="M10 24V3M1.500 11L10 2.500L18.500 11" fill="none" stroke="#afb1b3" stroke-width="3.200"/></svg><svg class="a" style="left:118px;top:1334px;" width="26" height="28" viewBox="0 0 26 28"><path d="M0 1.500H24M0 8.500H17A5.500 5.500 0 0 1 17 21H13" fill="none" stroke="#afb1b3" stroke-width="3"/><path d="M15.500 15L10 21L15.500 27Z" fill="#afb1b3"/><rect x="0" y="19.500" width="6" height="3" fill="#afb1b3"/></svg><div class="a" style="left:108px;top:1376px;width:44px;height:44px;background:#5c6164;border-radius:6px"></div><svg class="a" style="left:118px;top:1384px;" width="26" height="25" viewBox="0 0 26 25"><path d="M0 5.500H9M0 13H7M0 22.500H24" fill="none" stroke="#c4c6c7" stroke-width="3"/><path d="M18 0V12" stroke="#c4c6c7" stroke-width="3.200"/><path d="M10.500 9.500H25.500L18 18Z" fill="#c4c6c7"/></svg><svg class="a" style="left:116px;top:1438px;" width="28" height="26" viewBox="0 0 28 26"><rect x="6" y="0" width="16" height="5" fill="#afb1b3"/><path d="M2 7H26A2 2 0 0 1 28 9V19H22V15H6V19H0V9A2 2 0 0 1 2 7Z" fill="#afb1b3"/><rect x="7.500" y="16.500" width="13" height="8" fill="none" stroke="#afb1b3" stroke-width="3"/><circle cx="24" cy="11" r="1.300" fill="#3c3f41"/></svg><svg class="a" style="left:119px;top:1487px;" width="22" height="27" viewBox="0 0 22 27"><path d="M0 3H7V1H15V3H22V7H0Z" fill="#afb1b3"/><path d="M2 9H20V24A3 3 0 0 1 17 27H5A3 3 0 0 1 2 24Z" fill="#afb1b3"/></svg><svg class="a" style="left:130px;top:1174px;" width="24" height="20" viewBox="0 0 24 20"><rect width="24" height="20" fill="#afb1b3"/><path d="M7 4.500L13 10L7 15.500" fill="none" stroke="#3c3f41" stroke-width="3"/></svg><svg class="a" style="left:293px;top:1169px;" width="30" height="30" viewBox="0 0 30 30"><path d="M2.500 11.500L6 24L18 5.600L24 24L28.100 13.500" fill="none" stroke="#b05b2e" stroke-width="2.600"/><circle cx="18" cy="5.600" r="5.100" fill="#b05b2e"/><circle cx="6" cy="24" r="5.100" fill="#b05b2e"/><circle cx="24" cy="24" r="5.100" fill="#b05b2e"/></svg><svg class="a" style="left:146px;top:1112px;" width="32" height="32" viewBox="0 0 16 16"><path d="M0.500 11.300C0.500 7 4.500 6.500 8.500 5.500C11.500 4.700 13.500 3.500 14.200 2.200C14.800 5 14.800 8.500 12 11C9 13.500 4 12.500 2.500 13.500C1.500 13 0.500 12.500 0.500 11.300Z" fill="#4c7a42"/><path d="M6.9 12.2L9.100000000000001 8.5H13.5L15.700000000000001 12.2L13.5 15.899999999999999H9.100000000000001Z" fill="#7d8487"/><path d="M10.0 10.7A2.100 2.100 0 1 0 12.600000000000001 10.7M11.3 9.7V12.0" fill="none" stroke="#3c3f41" stroke-width="0.800"/></svg><svg class="a" style="left:2971px;top:136px;" width="24" height="24" viewBox="0 0 24 24"><g fill="#afb1b3"><ellipse cx="12" cy="4.500" rx="11" ry="4.500"/><path d="M1 8.500C1 14 23 14 23 8.500V11.500C23 17 1 17 1 11.500ZM1 14.500C1 20 23 20 23 14.500V17.500C23 23 1 23 1 17.500ZM1 20.500C1 25 23 25 23 20.500V20.500C23 25.500 1 25.500 1 20.500Z"/></g></svg><span class="v" style="left:2995.8px;top:172.0px;font-size:22.71px;transform:rotate(90deg);letter-spacing:-0.298px;">Database</span><span class="t" style="left:2969.5px;top:304.4px;font-size:32px;color:#afb1b3;font-weight:bold;font-style:italic;">m</span><span class="v" style="left:2995.8px;top:345.0px;font-size:24px;transform:rotate(90deg);letter-spacing:-0.609px;">Maven</span><span class="v" style="left:2995.8px;top:449.0px;font-size:24px;transform:rotate(90deg);letter-spacing:-0.281px;">RestServices</span><svg class="a" style="left:2971px;top:1682px;" width="24" height="24" viewBox="0 0 24 24"><path d="M1 1V23" stroke="#afb1b3" stroke-width="2"/><rect x="5" y="1" width="18" height="22" fill="none" stroke="#afb1b3" stroke-width="2.500"/><path d="M9 7H19M9 12H19M9 17H19" stroke="#afb1b3" stroke-width="3"/></svg><span class="v" style="left:2995.8px;top:1717.0px;font-size:24px;transform:rotate(90deg);letter-spacing:-0.076px;">Word Book</span><svg class="a" style="left:63px;top:1869.5px;" width="18" height="22" viewBox="0 0 18 22"><path d="M0 0L18 11L0 22Z" fill="#afb1b3"/></svg><span class="t" style="left:94.5px;top:1865.5px;color:#ffffff;font-size:23.92px;letter-spacing:-1.120px;">Run</span><svg class="a" style="left:177px;top:1870.5px;" width="22" height="20" viewBox="0 0 22 20"><path d="M0 2H4M7 2H22M0 10H4M7 10H22M0 18H4M7 18H22" stroke="#afb1b3" stroke-width="3.600"/></svg><span class="t" style="left:208.5px;top:1865.5px;font-size:23.92px;letter-spacing:-0.910px;">TODO</span><svg class="a" style="left:318px;top:1869.5px;" width="22" height="22" viewBox="0 0 22 22"><circle cx="11" cy="11" r="11" fill="#afb1b3"/><path d="M11 4.500V12.500M11 15V18" stroke="#3c3f41" stroke-width="3.200"/></svg><span class="t" style="left:350.5px;top:1865.5px;font-size:23.92px;letter-spacing:-0.436px;">Problems</span><svg class="a" style="left:488px;top:1868.5px;" width="26" height="24" viewBox="0 0 26 24"><path d="M1 18C1 10 8 9 14 8C19 7 23 5 25 1C26 6 26 13 21 18C16 22 8 21 4 23C2 22 1 20 1 18Z" fill="#afb1b3"/><path d="M2 22C8 18 14 16 20 11" stroke="#3c3f41" stroke-width="1.500" fill="none"/></svg><span class="t" style="left:522.0px;top:1865.5px;font-size:24.13px;letter-spacing:-0.292px;">Spring</span><svg class="a" style="left:635px;top:1869.5px;" width="24" height="20" viewBox="0 0 24 20"><rect width="24" height="20" fill="#afb1b3"/><path d="M4 4.500L9 9.500L4 14.500M11 15H19" fill="none" stroke="#3c3f41" stroke-width="2.500"/></svg><span class="t" style="left:668.0px;top:1865.5px;font-size:24.70px;letter-spacing:-0.287px;">Terminal</span><svg class="a" style="left:801px;top:1867.5px;" width="27" height="27" viewBox="0 0 27 27"><path d="M13.500 20.500A9.500 9.500 0 1 1 21.500 11" fill="none" stroke="#afb1b3" stroke-width="2.600"/><path d="M11.500 5V11.500L8.500 14.500" fill="none" stroke="#afb1b3" stroke-width="2.400"/><path d="M14 11.500L27 19L14 27Z" fill="#afb1b3"/></svg><span class="t" style="left:837.0px;top:1865.5px;font-size:23.96px;letter-spacing:-0.234px;">Profiler</span><svg class="a" style="left:950px;top:1866.5px;" width="30" height="30" viewBox="0 0 30 30"><path d="M2.500 11.500L6 24L18 5.600L24 24L28.100 13.500" fill="none" stroke="#afb1b3" stroke-width="2.600"/><circle cx="18" cy="5.600" r="5.100" fill="#afb1b3"/><circle cx="6" cy="24" r="5.100" fill="#afb1b3"/><circle cx="24" cy="24" r="5.100" fill="#afb1b3"/></svg><span class="t" style="left:986.5px;top:1865.5px;font-size:24.21px;letter-spacing:-0.295px;">Endpoints</span><svg class="a" style="left:1134px;top:1868.5px;" width="26" height="26" viewBox="0 0 32 32"><path d="M0.900 13L11.800 2.100H18.900V3.700L15.700 5.600L13.500 8.100L19.500 13.800L21.400 14.900L31.200 24.700L26.600 29.900L16.200 20.400V18.500L9.400 12.500L5 17.100Z" fill="#afb1b3"/></svg><span class="t" style="left:1169.0px;top:1865.5px;font-size:23.98px;letter-spacing:-0.263px;">Build</span><svg class="a" style="left:1262px;top:1868.5px;" width="26" height="24" viewBox="0 0 26 24"><path d="M7 0H19L26 12L19 24H7L0 12Z" fill="#afb1b3"/><path d="M9.500 6L19 12L9.500 18Z" fill="#3c3f41"/></svg><span class="t" style="left:1297.0px;top:1865.5px;font-size:23.92px;letter-spacing:-1.084px;">Services</span><svg class="a" style="left:2560px;top:1867.5px;" width="26" height="26" viewBox="0 0 26 26"><path d="M13 0A13 13 0 1 0 13 26H26V13A13 13 0 0 0 13 0Z" fill="#c75450"/><text x="13" y="20" font-family="Liberation Sans,sans-serif" font-weight="bold" font-size="19" text-anchor="middle" fill="#ffffff">2</text></svg><span class="t" style="left:2595.0px;top:1865.5px;font-size:23.92px;letter-spacing:-0.630px;">Event Log</span><svg class="a" style="left:2744px;top:1866.5px;" width="28" height="28" viewBox="0 0 16 16"><path d="M15.500 0.300C11.500 0.300 8 2.500 6 6L2.200 6.500L0.300 8.800L4.300 9.300L7 12L7.500 16L9.800 14L10.300 10.300C13.500 8.200 15.700 4.500 15.500 0.300Z" fill="#86b92a"/><circle cx="10.800" cy="5.200" r="1.300" fill="#ffffff"/><text x="7.200" y="15.800" font-family="Liberation Sans,sans-serif" font-weight="bold" font-size="7" fill="#ffffff" textLength="8.600" lengthAdjust="spacingAndGlyphs">JR</text></svg><span class="t" style="left:2778.0px;top:1865.5px;font-size:23.92px;letter-spacing:-0.699px;">JRebel Console</span><svg class="a" style="left:12px;top:1910px;" width="24" height="24" viewBox="0 0 24 24"><rect x="5.500" y="1" width="17.500" height="17.500" fill="none" stroke="#afb1b3" stroke-width="2"/><path d="M1 5.500V23H18.500" fill="none" stroke="#afb1b3" stroke-width="2"/></svg><span class="t" style="left:54.5px;top:1904.5px;letter-spacing:-0.279px;">Build completed successfully in 1 sec, 394 ms (moments ago)</span><span class="t" style="left:2491.0px;top:1904.5px;font-size:23.92px;letter-spacing:-0.383px;">12:1</span><span class="t" style="left:2562.5px;top:1904.5px;font-size:23.92px;letter-spacing:-1.734px;">CRLF</span><span class="t" style="left:2645.0px;top:1904.5px;font-size:24.43px;letter-spacing:-0.338px;">UTF-8</span><span class="t" style="left:2737.5px;top:1904.5px;font-size:24.73px;letter-spacing:-0.305px;">4 spaces</span><svg class="a" style="left:2857px;top:1909px;" width="24" height="26" viewBox="0 0 24 26"><path d="M2 12V7.500A5.500 5.500 0 0 1 13 7.500" fill="none" stroke="#afb1b3" stroke-width="3"/><rect x="6.500" y="12" width="16.500" height="13" fill="#afb1b3"/></svg><svg class="a" style="left:2908px;top:1910px;" width="24" height="24" viewBox="0 0 24 24"><circle cx="12" cy="12" r="12" fill="#c75450"/><path d="M12 4.500V14M12 17V20.500" stroke="#3c3f41" stroke-width="3.400"/></svg><svg class="a" style="left:2956px;top:1909px;" width="25" height="25" viewBox="0 0 25 25"><path d="M12.500 12.500L23.500 5A12.500 12.500 0 0 0 12.500 0A12.500 12.500 0 0 0 1.500 6.500Z" fill="#ea4335"/><path d="M12.500 12.500L1.500 6.500A12.500 12.500 0 0 0 1.500 18.500Z" fill="#fbbc05"/><path d="M12.500 12.500L1.500 18.500A12.500 12.500 0 0 0 20.500 22Z" fill="#34a853"/><path d="M12.500 12.500L20.500 22A12.500 12.500 0 0 0 24.800 10.300H12.500Z" fill="#4285f4"/><circle cx="12.500" cy="12.500" r="7.300" fill="#3c3f41"/><rect x="12.500" y="10.300" width="12.300" height="4.600" fill="#4285f4"/><path d="M12.500 12.500L26 2V10.300H12.500Z" fill="#3c3f41"/></svg>
</body></html>
